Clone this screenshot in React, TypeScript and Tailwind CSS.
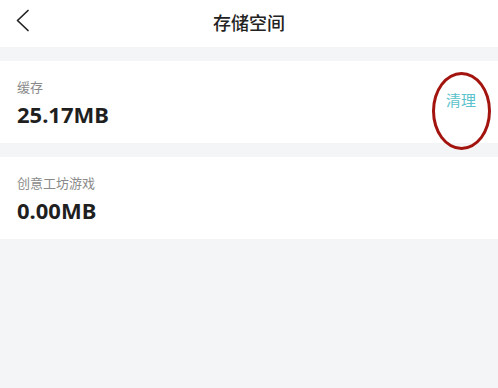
const font = { fontFamily: '"Noto Sans", "Noto Sans CJK SC", sans-serif' }

function StorageRow({ label, size, action }: { label: string; size: string; action?: string }) {
  return (
    <div className="relative flex h-[82px] items-center justify-between bg-white pl-[17px] pr-[22px]">
      <div className="flex flex-col">
        <span className="text-[13px] leading-[18px] text-[#8a8a8a]">{label}</span>
        <span className="mt-[5px] text-[22px] font-bold leading-[26px] text-[#1f1f1f]">{size}</span>
      </div>
      {action && (
        <span className="mt-[-4px] text-[15px] leading-5 text-[#5cc3cc]">{action}</span>
      )}
      {action && (
        <div className="pointer-events-none absolute left-[432px] top-[11px] h-[78px] w-[59px] rounded-[50%] border-[3px] border-[#a3140f]" />
      )}
    </div>
  )
}

export default function App() {
  return (
    <div className="h-[388px] w-full overflow-hidden bg-[#f4f5f6]" style={font}>
      <div className="relative flex h-[47px] items-center justify-center bg-white">
        <svg className="absolute left-[14px] top-[8px] h-[26px] w-[18px]" viewBox="0 0 18 26" fill="none">
          <polyline points="14,2.5 3.5,12.5 14,22.5" stroke="#222" strokeWidth="1.7" strokeLinecap="round" strokeLinejoin="round" />
        </svg>
        <span className="text-[18px] font-medium text-[#222]">存储空间</span>
      </div>
      <div className="mt-[14px] flex flex-col gap-[14px]">
        <StorageRow label="缓存" size="25.17MB" action="清理" />
        <StorageRow label="创意工坊游戏" size="0.00MB" />
      </div>
    </div>
  )
}
